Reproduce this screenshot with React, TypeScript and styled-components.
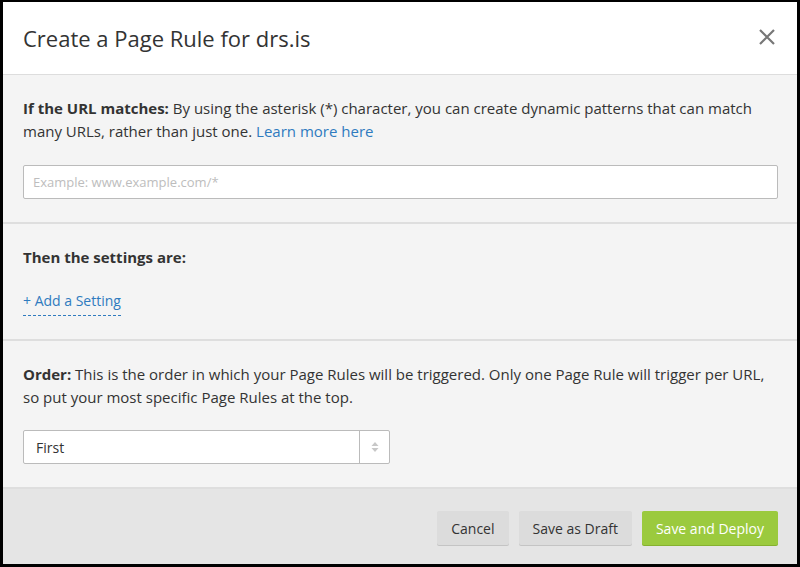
import React from "react";
import styled, { createGlobalStyle } from "styled-components";

const Global = createGlobalStyle`
  html, body { margin: 0; padding: 0; background: #000; }
  body { font-family: "Open Sans", "Liberation Sans", sans-serif; color: #333; }
  * { box-sizing: border-box; }
`;

const Modal = styled.div`
  margin: 2px 0 0 3px;
  width: 794px;
  height: 562px;
  background: #f4f4f4;
  display: flex;
  flex-direction: column;
  overflow: hidden;
`;

const Header = styled.div`
  height: 73px;
  background: #fff;
  border-bottom: 1px solid #ddd;
  display: flex;
  align-items: center;
  justify-content: space-between;
  padding: 0 20px 0 20px;
  flex-shrink: 0;
`;

const Title = styled.h2`
  margin: 0;
  font-size: 22px;
  font-weight: 400;
  color: #333;
  padding-bottom: 1px;
`;

const Close = styled.button`
  border: 0;
  background: none;
  padding: 0;
  width: 20px;
  height: 20px;
  display: flex;
  align-items: center;
  justify-content: center;
  margin-bottom: 3px;
  cursor: pointer;
`;

const Section = styled.div`
  padding: 22px 19px 23px 20px;
  border-bottom: 2px solid #dedede;
  display: flex;
  flex-direction: column;
  gap: 22px;
`;

const Text = styled.p`
  margin: 0;
  font-size: 15px;
  line-height: 23px;
  color: #333;
`;

const Strong = styled.strong`
  font-weight: 700;
`;

const Link = styled.a`
  color: #2f7bbf;
  text-decoration: none;
`;

const Input = styled.input`
  width: 100%;
  height: 34px;
  border: 1px solid #bbb;
  border-radius: 2px;
  background: #fff;
  padding: 0 9px;
  font-family: inherit;
  font-size: 13px;
  color: #333;
  &::placeholder { color: #bdbdbd; }
`;

const AddLink = styled.a`
  align-self: flex-start;
  color: #2f7bbf;
  font-size: 14px;
  line-height: 23px;
  text-decoration: none;
  border-bottom: 1px dashed #2f7bbf;
  padding-bottom: 3px;
  margin-top: -2px;
`;

const Select = styled.div`
  width: 367px;
  height: 34px;
  margin-top: -1px;
  border: 1px solid #bbb;
  border-radius: 2px;
  background: #fff;
  display: flex;
  align-items: stretch;
`;

const SelectValue = styled.div`
  flex: 1;
  padding: 0 12px;
  display: flex;
  align-items: center;
  font-size: 14px;
  color: #333;
`;

const SelectArrows = styled.div`
  width: 30px;
  border-left: 1px solid #bbb;
  display: flex;
  align-items: center;
  justify-content: center;
`;

const Footer = styled.div`
  flex: 1;
  background: #e5e5e5;
  display: flex;
  justify-content: flex-end;
  align-items: flex-start;
  gap: 10px;
  padding: 22px 19px 0 0;
`;

const Button = styled.button<{ $primary?: boolean }>`
  height: 34px;
  border: 0;
  border-radius: 2px;
  padding: 0 14px;
  font-family: inherit;
  font-size: 14px;
  color: ${(p) => (p.$primary ? "#fff" : "#333")};
  background: ${(p) => (p.$primary ? "#9bca3e" : "#dcdcdc")};
  box-shadow: 0 1px 0 ${(p) => (p.$primary ? "#86b12f" : "#c4c4c4")};
  cursor: pointer;
`;

export default function App() {
  return (
    <>
      <Global />
      <Modal>
        <Header>
          <Title>Create a Page Rule for drs.is</Title>
          <Close aria-label="Close">
            <svg width="16" height="16" viewBox="0 0 16 16">
              <path d="M1 1 L15 15 M15 1 L1 15" stroke="#777" strokeWidth="2.2" />
            </svg>
          </Close>
        </Header>
        <Section>
          <Text>
            <Strong>If the URL matches:</Strong> By using the asterisk (*) character, you can create dynamic patterns that can match many URLs, rather than just one. <Link>Learn more here</Link>
          </Text>
          <Input placeholder="Example: www.example.com/*" />
        </Section>
        <Section>
          <Text>
            <Strong>Then the settings are:</Strong>
          </Text>
          <AddLink>+ Add a Setting</AddLink>
        </Section>
        <Section>
          <Text>
            <Strong>Order:</Strong> This is the order in which your Page Rules will be triggered. Only one Page Rule will trigger per URL, so put your most specific Page Rules at the top.
          </Text>
          <Select>
            <SelectValue>First</SelectValue>
            <SelectArrows>
              <svg width="8" height="12" viewBox="0 0 8 12">
                <path d="M4 1 L7.5 5 H0.5 Z" fill="#c8c8c8" />
                <path d="M4 11 L7.5 7 H0.5 Z" fill="#c8c8c8" />
              </svg>
            </SelectArrows>
          </Select>
        </Section>
        <Footer>
          <Button>Cancel</Button>
          <Button>Save as Draft</Button>
          <Button $primary>Save and Deploy</Button>
        </Footer>
      </Modal>
    </>
  );
}
